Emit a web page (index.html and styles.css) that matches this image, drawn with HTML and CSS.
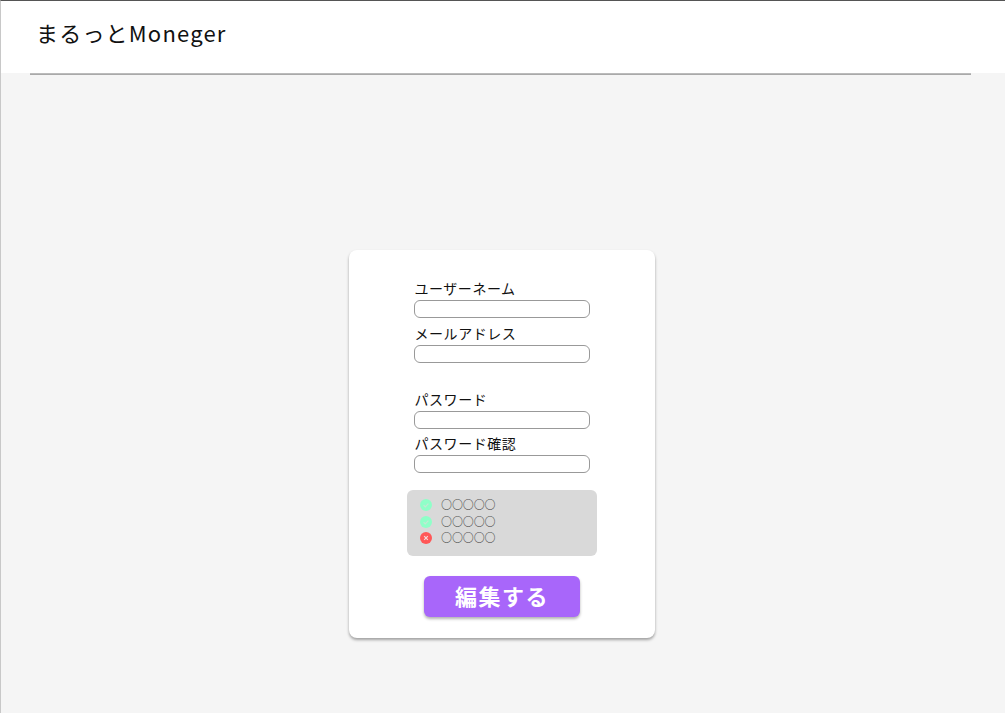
FILE: index.html
```html
<!DOCTYPE html>
<html lang="ja">
<head>
<meta charset="utf-8">
<title>まるっとMoneger</title>
<link rel="stylesheet" href="styles.css">
</head>
<body>
<div class="frame">
  <header class="header">
    <h1 class="logo">まるっとMoneger</h1>
  </header>
  <div class="rule"></div>
  <main class="main">
    <form class="card">
      <div class="fields">
        <div class="field"><label class="label">ユーザーネーム</label><input class="input" type="text"></div>
        <div class="field"><label class="label">メールアドレス</label><input class="input" type="text"></div>
        <div class="field field-gap"><label class="label">パスワード</label><input class="input" type="password"></div>
        <div class="field field-tight"><label class="label">パスワード確認</label><input class="input" type="password"></div>
      </div>
      <ul class="rules">
        <li class="rule-row">
          <svg class="status" viewBox="0 0 12 12"><circle cx="6" cy="6" r="6" fill="#8fffc8"/><path d="M3.6 6.2 5.3 7.8 8.4 4.6" fill="none" stroke="#c4e8d4" stroke-width="1.2"/></svg>
          <span class="rule-text">〇〇〇〇〇</span>
        </li>
        <li class="rule-row">
          <svg class="status" viewBox="0 0 12 12"><circle cx="6" cy="6" r="6" fill="#8fffc8"/><path d="M3.6 6.2 5.3 7.8 8.4 4.6" fill="none" stroke="#c4e8d4" stroke-width="1.2"/></svg>
          <span class="rule-text">〇〇〇〇〇</span>
        </li>
        <li class="rule-row">
          <svg class="status" viewBox="0 0 12 12"><circle cx="6" cy="6" r="6" fill="#ff5757"/><path d="M4.2 4.2 7.8 7.8M7.8 4.2 4.2 7.8" fill="none" stroke="#f5dada" stroke-width="1.2"/></svg>
          <span class="rule-text">〇〇〇〇〇</span>
        </li>
      </ul>
      <button class="submit" type="button"><span class="submit-text">編集する</span></button>
    </form>
  </main>
</div>
</body>
</html>
```
FILE: styles.css
```css
* { box-sizing: border-box; }
html, body { margin: 0; height: 100%; }
body {
  font-family: "Noto Sans CJK JP", "Noto Sans", sans-serif;
  color: #000;
  background: #f5f5f5;
  overflow: hidden;
}
.frame {
  height: 713px;
  border-top: 1px solid #555;
  border-left: 1px solid #c8c8c8;
  display: flex;
  flex-direction: column;
}
.header {
  height: 72px;
  background: #fff;
  display: flex;
  align-items: center;
  padding: 0 35px;
}
.logo {
  margin: 0;
  font-size: 22px;
  font-weight: 400;
  line-height: 32px;
  letter-spacing: 1.2px;
  color: #111;
  position: relative;
  top: -5px;
}
.rule {
  height: 2px;
  margin: 0 34px 0 29px;
  background: linear-gradient(#c4c4c4, #a0a0a0);
}
.main {
  flex: 1;
  display: flex;
  justify-content: center;
  padding-top: 175px;
  padding-right: 2px;
}
.card {
  width: 306px;
  height: 388px;
  background: #fff;
  border-radius: 8px;
  box-shadow: 0 2px 3px rgba(0, 0, 0, .35);
  display: flex;
  flex-direction: column;
  align-items: center;
  padding-top: 28px;
}
.fields { width: 176px; display: flex; flex-direction: column; }
.field { display: flex; flex-direction: column; margin-bottom: 5px; }
.field-gap { margin-top: 21px; margin-bottom: 4px; }
.field-tight { margin-bottom: 0; }
.label {
  font-size: 14px;
  line-height: 20px;
  letter-spacing: .55px;
  padding-left: .5px;
  color: #111;
}
.input {
  width: 176px;
  height: 18px;
  padding: 0 6px;
  margin: 2px 0 0;
  background: #fff;
  border: 1px solid #999;
  border-radius: 6px;
  outline: none;
}
.rules {
  list-style: none;
  margin: 17px 0 0;
  padding: 7px 13px;
  width: 190px;
  height: 66px;
  background: #d9d9d9;
  border-radius: 6px;
}
.rule-row {
  display: flex;
  align-items: center;
  gap: 9px;
  height: 16.5px;
  font-size: 11px;
  font-weight: 300;
  letter-spacing: -.1px;
  color: #555;
}
.rule-text { position: relative; top: -1px; }
.status { width: 12px; height: 12px; flex: none; }
.submit {
  width: 156px;
  height: 41px;
  margin-top: 20px;
  border: 0;
  border-radius: 6px;
  background: #a866fa;
  box-shadow: 0 2px 3px rgba(0, 0, 0, .3);
  color: #fff;
  font: 700 22px/1 "Noto Sans CJK JP", sans-serif;
  letter-spacing: 1.5px;
  padding: 0;
}
.submit-text { position: relative; top: -2px; }
```
